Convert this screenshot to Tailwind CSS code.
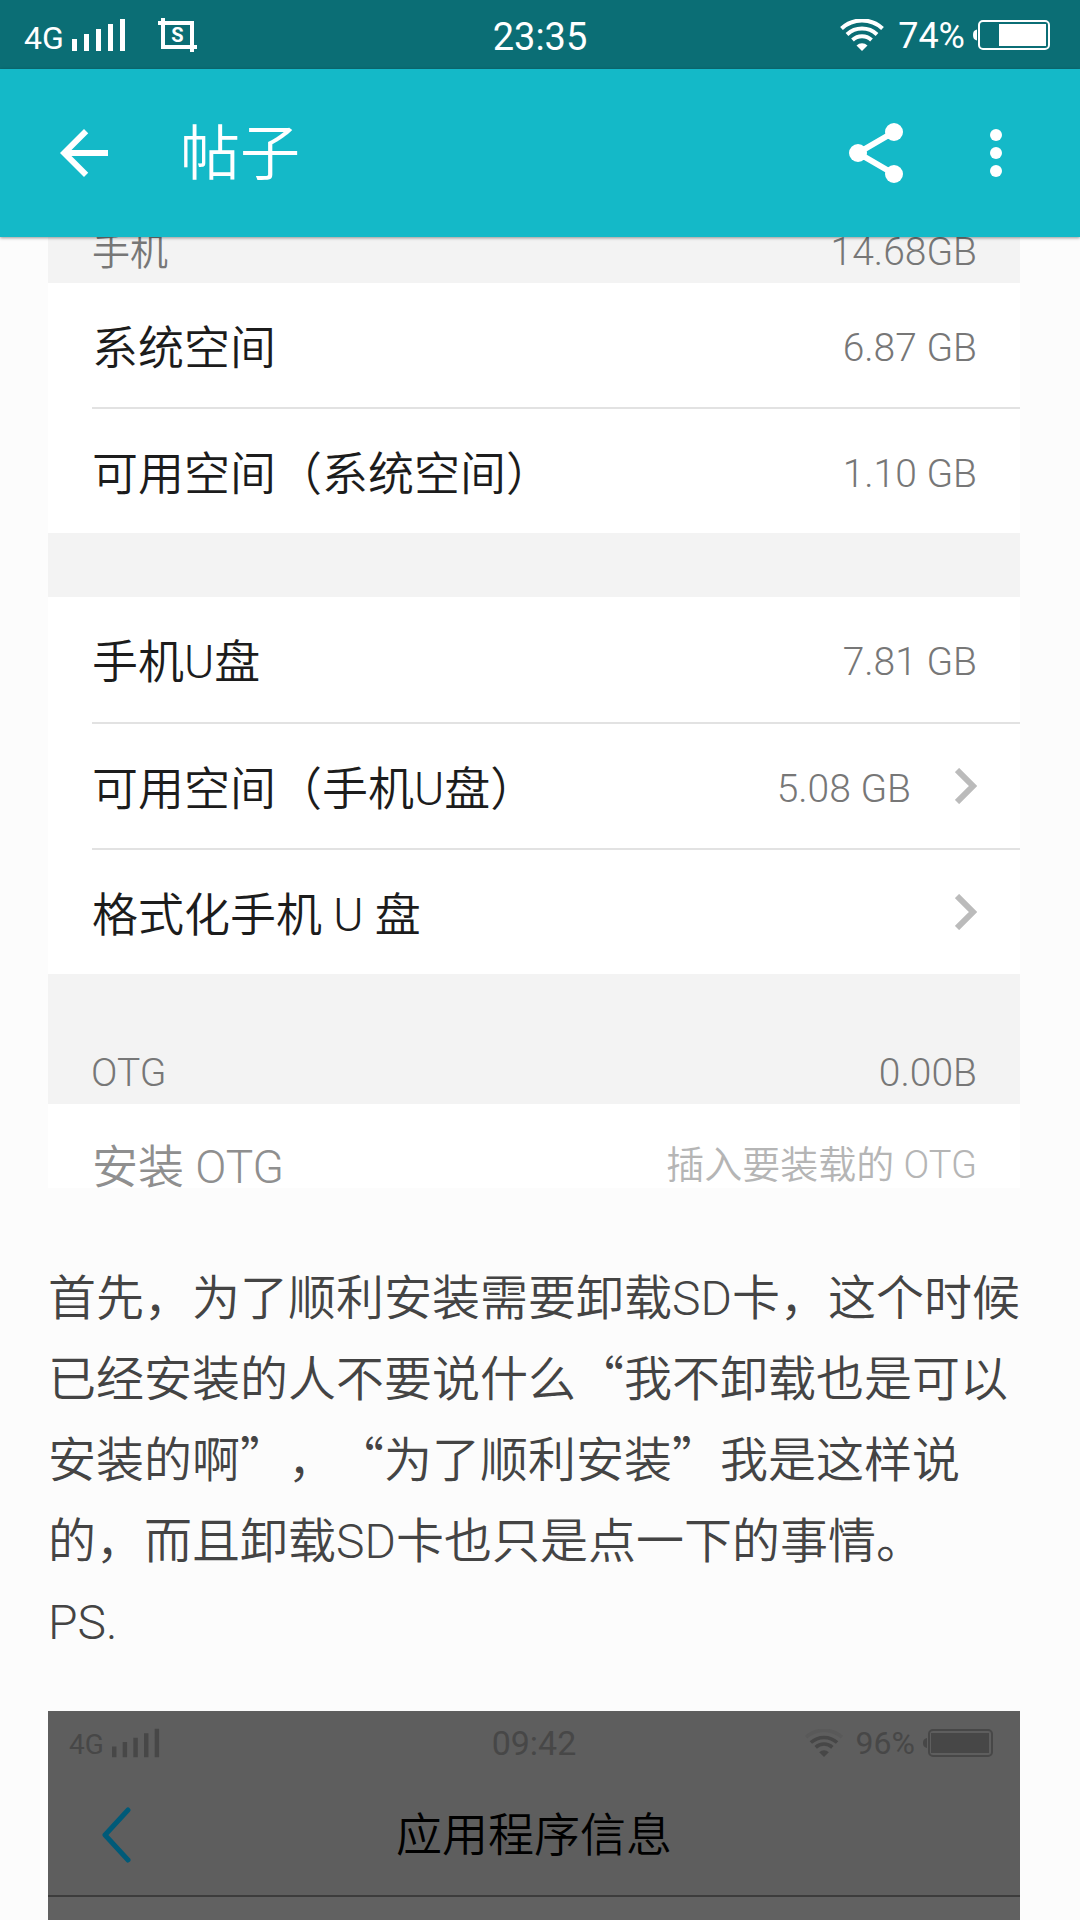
<!DOCTYPE html>
<html lang="zh-CN">
<head>
  <meta charset="UTF-8">
  <meta name="viewport" content="width=device-width, initial-scale=1">
  <title>帖子</title>
  <script src="https://cdn.jsdelivr.net/npm/@tailwindcss/browser@4"></script>
</head>
<body class="flex h-screen flex-col overflow-hidden bg-[#fcfcfc] font-['Roboto','Noto_Sans_CJK_SC',sans-serif] font-light">

  <!-- Status bar -->
  <div class="grid h-[69px] shrink-0 grid-cols-3 items-center bg-[#0b6e75] px-6 font-normal text-white">
    <div class="flex items-center">
      <span class="pt-1.5 text-[32px] leading-8">4G</span>
      <svg class="ml-2 h-8 w-[54px]" viewBox="0 0 54 32" fill="currentColor" aria-hidden="true">
        <path d="M0 20h5v12H0zM12 15h5v17h-5zM24 10h5v22h-5zM36 5h5v27h-5zM48 0h5v32h-5z" />
      </svg>
      <svg class="ml-8 h-[34px] w-[39px]" viewBox="0 0 39 34" aria-hidden="true">
        <path d="M0 5h34v29M5 0v29h34" fill="none" stroke="currentColor" stroke-width="4" />
        <text x="19.5" y="24" text-anchor="middle" font-size="20" font-weight="700" fill="currentColor">S</text>
      </svg>
    </div>
    <div class="pt-1 text-center text-[38px] leading-10">23:35</div>
    <div class="mr-1.5 flex items-center justify-end">
      <svg class="h-8 w-11" viewBox="0 0 44 32" fill="none" stroke="currentColor" stroke-width="4" aria-hidden="true">
        <path d="M1.500 9.500A30 30 0 0 1 42.500 9.500M7 15.500A22 22 0 0 1 37 15.500M12.500 21A14 14 0 0 1 31.500 21" />
        <path d="M22 32l-5.500-5.500A8 8 0 0 1 27.500 26.500z" fill="currentColor" stroke="none" />
      </svg>
      <span class="ml-3.5 pt-0.5 text-[36px] leading-9">74%</span>
      <svg class="ml-2 h-[30px] w-[77px]" viewBox="0 0 77 30" aria-hidden="true">
        <path d="M4 9.500v11C1 20 0 18 0 15s1-5 4-5.500z" fill="currentColor" />
        <rect x="6" y="1" width="70" height="28" rx="4" fill="none" stroke="currentColor" stroke-width="2" />
        <path d="M26 4h47v22H26z" fill="currentColor" />
      </svg>
    </div>
  </div>

  <!-- App bar -->
  <header class="z-10 flex h-[168px] shrink-0 items-center bg-[#14b9c8] px-12 text-white shadow-[0_1px_3px_rgba(0,0,0,0.4)]">
    <button type="button" aria-label="返回">
      <svg class="size-[72px]" viewBox="0 0 24 24" fill="currentColor"><path d="M20 11H7.830l5.590-5.590L12 4l-8 8 8 8 1.410-1.410L7.830 13H20v-2z" /></svg>
    </button>
    <h1 class="ml-[60px] flex-1 pt-1 text-[60px] leading-[80px] font-[350]">帖子</h1>
    <button type="button" aria-label="分享">
      <svg class="size-[72px]" viewBox="0 0 24 24" fill="currentColor">
        <path d="M18 5L6 12l12 7" fill="none" stroke="currentColor" stroke-width="2" />
        <circle cx="18" cy="5" r="3" /><circle cx="6" cy="12" r="3" /><circle cx="18" cy="19" r="3" />
      </svg>
    </button>
    <button type="button" class="ml-12" aria-label="更多">
      <svg class="size-[72px]" viewBox="0 0 24 24" fill="currentColor"><circle cx="12" cy="6" r="2" /><circle cx="12" cy="12" r="2" /><circle cx="12" cy="18" r="2" /></svg>
    </button>
  </header>

  <main class="min-h-0 flex-1 overflow-hidden pl-12 pr-[60px]">

    <!-- Storage settings -->
    <section class="bg-white text-[46px] text-[#1c1c1c]">
      <div class="flex h-[46px] items-end justify-between bg-[#f3f3f3] pb-1 pl-11 pr-[43px] text-[39px] leading-[54px] text-[#777]">
        <span class="text-[38px] font-[350]">手机</span>
        <span>14.68GB</span>
      </div>
      <div class="ml-11 flex h-[126px] items-center justify-between border-b-2 border-[#e2e2e2] pr-[43px] pt-1.5">
        <span class="font-[350]">系统空间</span>
        <span class="text-[39px] text-[#777]">6.87 GB</span>
      </div>
      <div class="ml-11 flex h-[124px] items-center justify-between pr-[43px] pt-1.5">
        <span class="font-[350]">可用空间（系统空间）</span>
        <span class="text-[39px] text-[#777]">1.10 GB</span>
      </div>
      <div class="h-16 bg-[#f3f3f3]"></div>
      <div class="ml-11 flex h-[127px] items-center justify-between border-b-2 border-[#e2e2e2] pr-[43px] pt-1.5">
        <span class="font-[350]">手机U盘</span>
        <span class="text-[39px] text-[#777]">7.81 GB</span>
      </div>
      <a href="#" class="ml-11 flex h-[126px] items-center justify-between border-b-2 border-[#e2e2e2] pr-[43px]">
        <span class="pt-1.5 font-[350]">可用空间（手机U盘）</span>
        <span class="flex items-center gap-11 text-[39px] text-[#777]">
          <span class="pt-1.5">5.08 GB</span>
          <svg class="h-9 w-[22px] text-[#bbb]" viewBox="0 0 22 36" fill="none" stroke="currentColor" stroke-width="6" aria-hidden="true"><path d="M2 2l16 16L2 34" /></svg>
        </span>
      </a>
      <a href="#" class="ml-11 flex h-[124px] items-center justify-between pr-[43px]">
        <span class="pt-1.5 font-[350]">格式化手机 U 盘</span>
        <svg class="h-9 w-[22px] text-[#bbb]" viewBox="0 0 22 36" fill="none" stroke="currentColor" stroke-width="6" aria-hidden="true"><path d="M2 2l16 16L2 34" /></svg>
      </a>
      <div class="flex h-[130px] items-end justify-between bg-[#f3f3f3] pb-1 pl-[43px] pr-[43px] text-[39px] leading-[54px] text-[#777]">
        <span>OTG</span>
        <span>0.00B</span>
      </div>
      <div class="ml-11 flex h-[84px] items-end justify-between overflow-hidden pr-[43px] text-[#8f8f8f]">
        <span class="leading-[42px] font-[350]">安装 OTG</span>
        <span class="text-[38px] leading-[46px] font-[350] text-[#b5b5b5]">插入要装载的 OTG</span>
      </div>
    </section>

    <!-- Post text -->
    <p class="-mr-2 mt-[66px] font-['Noto_Sans_CJK_SC',sans-serif] text-[48px] leading-[81px] font-[350] text-[#444] [text-spacing-trim:space-all]">首先，为了顺利安装需要卸载<span class="font-['Roboto',sans-serif] leading-none">SD</span>卡，这个时候已经安装的人不要说什么“我不卸载也是可以安装的啊”，“为了顺利安装”我是这样说的，而且卸载<span class="font-['Roboto',sans-serif] leading-none">SD</span>卡也只是点一下的事情。<br><span class="font-['Roboto',sans-serif] leading-none">PS.</span></p>

    <!-- Dimmed app info screen -->
    <section class="mt-[52px] h-[260px] bg-[#616161]">
      <div class="border-b-2 border-[#3c3c3c] bg-[#5e5e5e]">
        <div class="grid h-16 grid-cols-3 items-center px-[21px] font-normal text-[#474747]">
          <div class="flex items-center">
            <span class="pt-1 text-[28px] leading-8">4G</span>
            <svg class="ml-2 h-[30px] w-12" viewBox="0 0 54 32" fill="currentColor" aria-hidden="true">
              <path d="M0 20h5v12H0zM12 15h5v17h-5zM24 10h5v22h-5zM36 5h5v27h-5zM48 0h5v32h-5z" />
            </svg>
          </div>
          <div class="text-center text-[34px] leading-10">09:42</div>
          <div class="mr-1.5 flex items-center justify-end">
            <svg class="h-7 w-10" viewBox="0 0 44 32" fill="none" stroke="currentColor" stroke-width="4" aria-hidden="true">
              <path d="M1.500 9.500A30 30 0 0 1 42.500 9.500" class="opacity-20" />
              <path d="M7 15.500A22 22 0 0 1 37 15.500M12.500 21A14 14 0 0 1 31.500 21" />
              <path d="M22 32l-5.500-5.500A8 8 0 0 1 27.500 26.500z" fill="currentColor" stroke="none" />
            </svg>
            <span class="ml-3 text-[32px] leading-9">96%</span>
            <svg class="ml-2 h-7 w-[70px]" viewBox="0 0 70 28" aria-hidden="true">
              <path d="M4 9v10C1 18 0 17 0 14s1-4 4-5z" fill="currentColor" />
              <rect x="6" y="1" width="63" height="26" rx="4" fill="none" stroke="currentColor" stroke-width="2" />
              <path d="M8 4h58v20H8z" fill="currentColor" />
            </svg>
          </div>
        </div>
        <div class="grid h-[120px] grid-cols-[1fr_auto_1fr] items-center pl-[53px] pr-[53px]">
          <button type="button" class="justify-self-start" aria-label="返回">
            <svg class="h-14 w-[30px]" viewBox="0 0 30 56" fill="none" stroke="#005a78" stroke-width="5" stroke-linecap="round" stroke-linejoin="round"><path d="M27 3L4 28l23 25" /></svg>
          </button>
          <h2 class="text-[46px] font-[350] text-black">应用程序信息</h2>
        </div>
      </div>
    </section>
  </main>
</body>
</html>
